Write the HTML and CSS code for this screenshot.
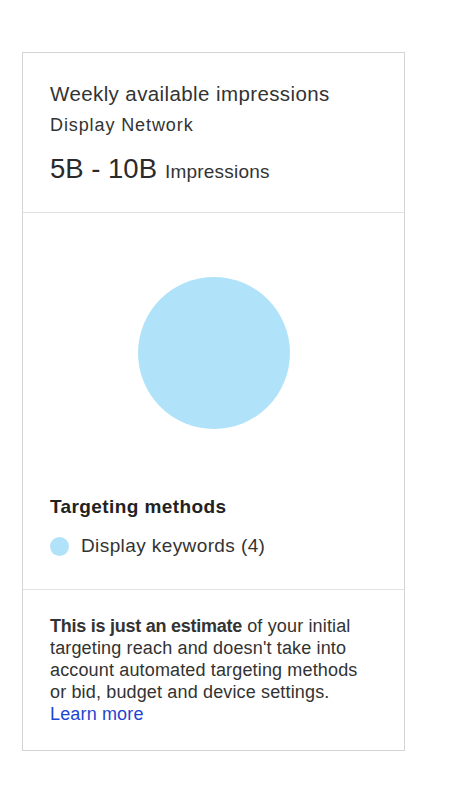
FILE: index.html
```html
<!DOCTYPE html>
<html>
<head>
<meta charset="utf-8">
<link rel="stylesheet" href="styles.css">
</head>
<body>
<div class="card">
  <section class="summary">
    <div class="title">Weekly available impressions</div>
    <div class="subtitle">Display Network</div>
    <div class="range"><span class="range-value">5B - 10B</span><span class="range-unit">Impressions</span></div>
  </section>
  <section class="chart">
    <div class="chart-area">
      <div class="bubble"></div>
    </div>
    <div class="legend-title">Targeting methods</div>
    <div class="legend-item"><span class="dot"></span><span>Display keywords (4)</span></div>
  </section>
  <section class="note">
    <p><b>This is just an estimate</b> of your initial targeting reach and doesn't take into account automated targeting methods or bid, budget and device settings. <a href="#" class="link">Learn more</a></p>
  </section>
</div>
</body>
</html>
```
FILE: styles.css
```css
html, body {
  margin: 0;
  padding: 0;
  background: #fff;
}
body {
  font-family: "Liberation Sans", Arial, sans-serif;
  color: #333;
}
.card {
  margin: 52px 0 0 22px;
  width: 381px;
  border: 1px solid #d4d4d4;
}
.summary {
  height: 160px;
  box-sizing: border-box;
  padding: 29px 27px 0;
  border-bottom: 1px solid #e2e2e2;
}
.title {
  font-size: 20.5px;
  letter-spacing: 0.4px;
  line-height: 24px;
  color: #333;
}
.subtitle {
  font-size: 18px;
  letter-spacing: 0.9px;
  line-height: 22px;
  margin-top: 8px;
  color: #333;
}
.range {
  margin-top: 18px;
  line-height: 30px;
  display: flex;
  align-items: baseline;
  gap: 8px;
}
.range-value {
  font-size: 27.5px;
  color: #2a2a2a;
}
.range-unit {
  font-size: 19px;
  letter-spacing: 0.2px;
}
.chart {
  height: 377px;
  box-sizing: border-box;
  padding: 0 27px;
  border-bottom: 1px solid #e2e2e2;
}
.chart-area {
  height: 268px;
  display: flex;
  align-items: center;
  justify-content: center;
  padding-top: 11px;
  box-sizing: border-box;
}
.bubble {
  width: 152px;
  height: 152px;
  border-radius: 50%;
  background: #b0e3f9;
}
.legend-title {
  font-size: 19px;
  letter-spacing: 0.4px;
  font-weight: bold;
  line-height: 22px;
  margin-top: 15px;
  color: #222;
}
.legend-item {
  display: flex;
  align-items: center;
  gap: 12px;
  margin-top: 17px;
  font-size: 19px;
  letter-spacing: 0.4px;
  line-height: 22px;
  color: #333;
}
.dot {
  width: 19px;
  height: 19px;
  border-radius: 50%;
  background: #b0e3f9;
  flex: none;
}
.note {
  height: 160px;
  box-sizing: border-box;
  padding: 25px 36px 0 27px;
}
.note p {
  margin: 0;
  font-size: 18px;
  letter-spacing: 0.15px;
  line-height: 22px;
  color: #333;
}
.note b {
  color: #333;
  letter-spacing: -0.25px;
}
.link {
  color: #1f45d0;
  text-decoration: none;
}
```
